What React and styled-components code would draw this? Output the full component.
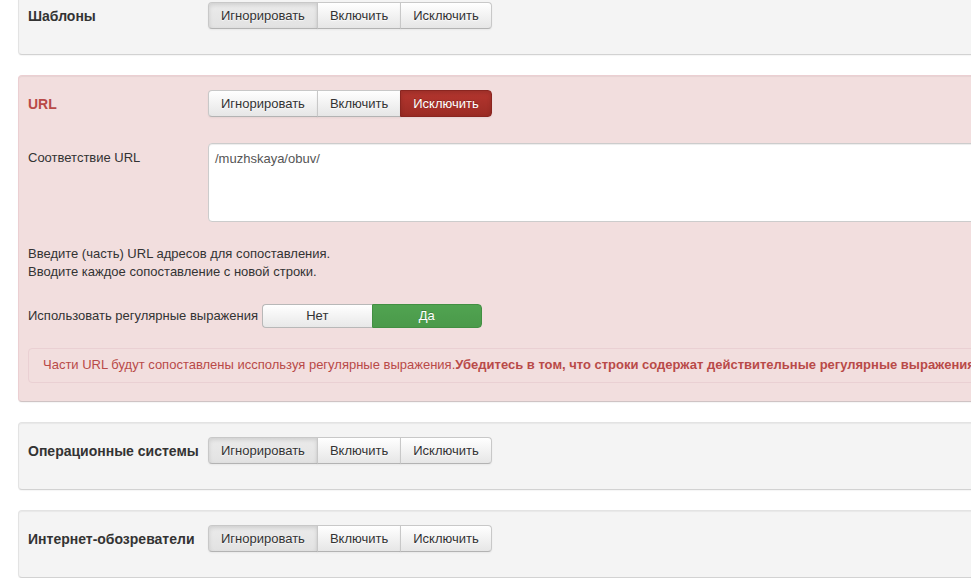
import React from "react";
import styled, { createGlobalStyle, css } from "styled-components";

const GlobalStyle = createGlobalStyle`
  html, body {
    margin: 0;
    padding: 0;
    background: #fff;
    overflow: hidden;
  }
  body {
    font-family: "Liberation Sans", Arial, sans-serif;
    font-size: 13px;
    line-height: 18px;
    color: #333;
  }
`;

const Page = styled.div`
  width: 1100px;
  padding-left: 18px;
  margin-top: -13px;
`;

const Panel = styled.div`
  box-sizing: border-box;
  margin-bottom: 20px;
  padding: 14px 9px ${(p) => p.$pb || 25}px;
  border: 1px solid ${(p) => (p.$error ? "#ebcfd2" : "#e3e3e3")};
  border-bottom-color: ${(p) => (p.$error ? "#cfc3c4" : "#d2d2d2")};
  border-radius: 4px;
  background: ${(p) => (p.$error ? "#f2dede" : "#f4f4f4")};
  box-shadow: inset 0 1px 1px rgba(0, 0, 0, 0.05), 0 1px 1px rgba(0, 0, 0, 0.04);
`;

const Row = styled.div`
  display: flex;
  align-items: ${(p) => p.$align || "center"};
  margin-top: ${(p) => p.$mt || 0}px;
`;

const Label = styled.div`
  box-sizing: border-box;
  min-width: 180px;
  padding-right: 6px;
  font-size: ${(p) => (p.$bold ? 14 : 13)}px;
  font-weight: ${(p) => (p.$bold ? 700 : 400)};
  color: ${(p) => (p.$error ? "#b94a48" : "#333")};
  white-space: nowrap;
  padding-top: ${(p) => p.$pt || 0}px;
`;

const InlineLabel = styled.span`
  margin-right: 4px;
  white-space: nowrap;
`;

const BtnGroup = styled.div`
  display: inline-flex;
`;

const Btn = styled.button`
  font-family: "Liberation Sans", Arial, sans-serif;
  font-size: 13px;
  line-height: 17px;
  padding: 4px 12px;
  margin: 0;
  margin-left: -1px;
  color: #333;
  border: 1px solid #c8c8c8;
  border-bottom-color: #b3b3b3;
  background: linear-gradient(to bottom, #ffffff, #e6e6e6);
  text-shadow: 0 1px 1px rgba(255, 255, 255, 0.75);
  box-shadow: inset 0 1px 0 rgba(255, 255, 255, 0.2), 0 1px 2px rgba(0, 0, 0, 0.05);
  cursor: pointer;

  &:first-child {
    margin-left: 0;
    border-radius: 4px 0 0 4px;
  }
  &:last-child {
    border-radius: 0 4px 4px 0;
  }

  ${(p) =>
    p.$active &&
    css`
      background: linear-gradient(to bottom, #ebebeb, #e2e2e2);
      box-shadow: inset 0 2px 4px rgba(0, 0, 0, 0.12), 0 1px 2px rgba(0, 0, 0, 0.05);
    `}

  ${(p) =>
    p.$danger &&
    css`
      color: #fff;
      text-shadow: 0 -1px 0 rgba(0, 0, 0, 0.25);
      border-color: #8a2520;
      background: linear-gradient(to bottom, #b5362f, #9b2b24);
      box-shadow: inset 0 2px 4px rgba(0, 0, 0, 0.15), 0 1px 2px rgba(0, 0, 0, 0.05);
      position: relative;
    `}
`;

const Textarea = styled.div`
  box-sizing: border-box;
  flex: 1;
  height: 79px;
  padding: 6px 6px;
  background: #fff;
  border: 1px solid #ccc;
  border-radius: 4px;
  box-shadow: inset 0 1px 1px rgba(0, 0, 0, 0.075);
  color: #555;
`;

const Help = styled.div`
  margin-top: 23px;
  color: #333;
`;

const Toggle = styled.div`
  display: inline-flex;
  width: 220px;
  height: 24px;
`;

const ToggleOpt = styled.div`
  flex: 1;
  display: flex;
  align-items: center;
  justify-content: center;
  box-sizing: border-box;
  ${(p) =>
    p.$on
      ? css`
          color: #fff;
          background: linear-gradient(to bottom, #51a351, #4a9a4a);
          border: 1px solid #428f42;
          border-radius: 0 4px 4px 0;
          text-shadow: 0 -1px 0 rgba(0, 0, 0, 0.2);
        `
      : css`
          color: #333;
          background: linear-gradient(to bottom, #ffffff, #e8e8e8);
          border: 1px solid #b8b8b8;
          border-right: none;
          border-radius: 4px 0 0 4px;
        `}
`;

const Alert = styled.div`
  margin-top: 20px;
  padding: 7px 14px 8px;
  border: 1px solid #ead0d3;
  border-radius: 4px;
  background: #f2dede;
  color: #b94a48;
  white-space: nowrap;
  overflow: hidden;
`;

const Buttons = ({ active }) => (
  <BtnGroup>
    <Btn $active={active === 0}>Игнорировать</Btn>
    <Btn $active={active === 1}>Включить</Btn>
    <Btn $active={active === 2} $danger={active === 2}>
      Исключить
    </Btn>
  </BtnGroup>
);

const SimplePanel = ({ title }) => (
  <Panel>
    <Row>
      <Label $bold>{title}</Label>
      <Buttons active={0} />
    </Row>
  </Panel>
);

export default function App() {
  return (
    <Page>
      <GlobalStyle />
      <SimplePanel title="Шаблоны" />

      <Panel $error $pb={18}>
        <Row>
          <Label $bold $error>
            URL
          </Label>
          <Buttons active={2} />
        </Row>
        <Row $mt={26} $align="flex-start">
          <Label $pt={6}>Соответствие URL</Label>
          <Textarea>/muzhskaya/obuv/</Textarea>
        </Row>
        <Help>
          Введите (часть) URL адресов для сопоставления.
          <br />
          Вводите каждое сопоставление с новой строки.
        </Help>
        <Row $mt={23}>
          <InlineLabel>Использовать регулярные выражения</InlineLabel>
          <Toggle>
            <ToggleOpt>Нет</ToggleOpt>
            <ToggleOpt $on>Да</ToggleOpt>
          </Toggle>
        </Row>
        <Alert>
          Части URL будут сопоставлены исспользуя регулярные выражения.
          <b>Убедитесь в том, что строки содержат действительные регулярные выражения.</b>
        </Alert>
      </Panel>

      <SimplePanel title="Операционные системы" />
      <SimplePanel title="Интернет-обозреватели" />
    </Page>
  );
}
